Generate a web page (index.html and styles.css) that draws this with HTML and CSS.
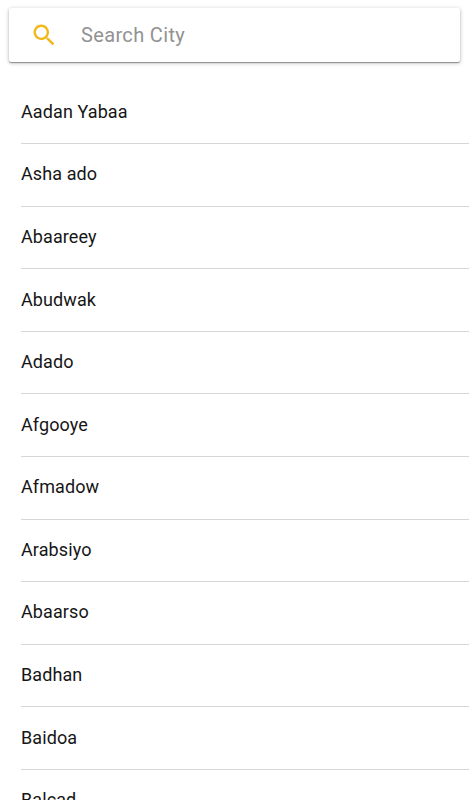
FILE: index.html
```html
<!DOCTYPE html>
<html lang="en">
<head>
    <meta charset="UTF-8">
    <meta name="viewport" content="width=device-width, initial-scale=1.0">
    <title>Search City</title>
    <link rel="stylesheet" href="styles.css">
</head>
<body>
    <div class="search-bar">
        <svg class="search-icon" viewBox="0 0 24 24" aria-hidden="true">
            <path d="M15.5 14h-.79l-.28-.27C15.41 12.59 16 11.11 16 9.5 16 5.91 13.09 3 9.5 3S3 5.91 3 9.5 5.91 16 9.5 16c1.61 0 3.09-.59 4.23-1.57l.27.28v.79l5 4.99L20.49 19l-4.99-5zm-6 0C7.01 14 5 11.99 5 9.5S7.01 5 9.5 5 14 7.01 14 9.5 11.99 14 9.5 14z"/>
        </svg>
        <input type="text" class="search-input" placeholder="Search City" aria-label="Search City">
    </div>
    <ul class="city-list">
        <li>Aadan Yabaa</li>
        <li>Asha ado</li>
        <li>Abaareey</li>
        <li>Abudwak</li>
        <li>Adado</li>
        <li>Afgooye</li>
        <li>Afmadow</li>
        <li>Arabsiyo</li>
        <li>Abaarso</li>
        <li>Badhan</li>
        <li>Baidoa</li>
        <li>Balcad</li>
    </ul>
</body>
</html>
```

FILE: styles.css
```css
* {
    margin: 0;
    padding: 0;
    box-sizing: border-box;
    font-family: Roboto, sans-serif;
}

body {
    background-color: #fff;
    height: 100vh;
    overflow: hidden;
}

.search-bar {
    display: flex;
    align-items: center;
    height: 54px;
    margin: 8px 9px 0;
    padding-left: 20.5px;
    background-color: #fff;
    border-radius: 2px;
    box-shadow: 0 1px 4px rgba(0, 0, 0, 0.26), 0 1px 1px rgba(0, 0, 0, 0.35);
}

.search-icon {
    width: 28.5px;
    height: 28.5px;
    margin-top: 1px;
    fill: #f0b81a;
}

.search-input {
    flex: 1;
    margin-left: 23px;
    border: none;
    outline: none;
    background: none;
    font-size: 20px;
    letter-spacing: 0.35px;
}

.search-input::placeholder {
    color: #929292;
}

.city-list {
    margin-top: 19.4px;
    padding-left: 21px;
    list-style: none;
}

.city-list li {
    display: flex;
    align-items: center;
    height: 62.6px;
    padding-bottom: 1.9px;
    border-bottom: 1px solid #d6d6d6;
    font-size: 18px;
    letter-spacing: 0.1px;
    color: #161616;
}
```
